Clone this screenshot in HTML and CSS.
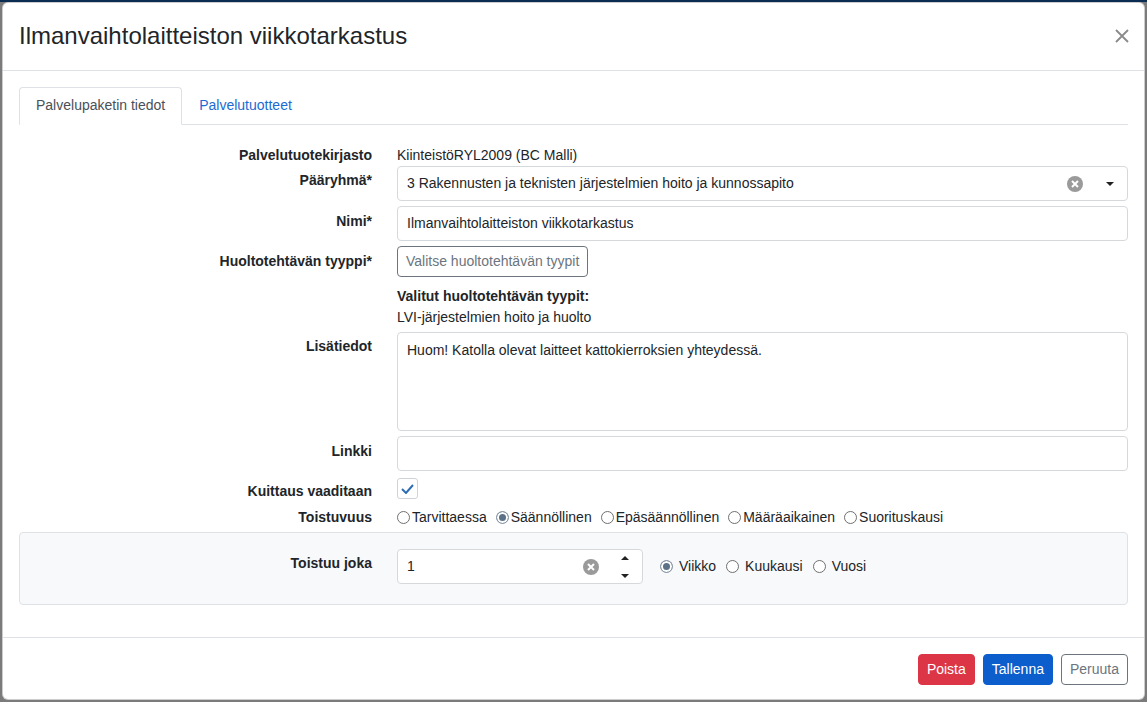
FILE: index.html
```html
<!DOCTYPE html>
<html lang="fi">
<head>
<meta charset="utf-8">
<title>Ilmanvaihtolaitteiston viikkotarkastus</title>
<link rel="stylesheet" href="styles.css">
</head>
<body>
<div class="modal">
  <div class="modal-header">
    <h4 class="modal-title">Ilmanvaihtolaitteiston viikkotarkastus</h4>
    <button class="close" type="button" aria-label="Sulje">
      <svg width="14" height="14" viewBox="0 0 14 14"><path d="M1 1L13 13M13 1L1 13" stroke="#8a8a8a" stroke-width="1.8" fill="none"/></svg>
    </button>
  </div>
  <div class="modal-body">
    <ul class="tabs">
      <li class="tab active">Palvelupaketin tiedot</li>
      <li class="tab">Palvelutuotteet</li>
    </ul>
    <div class="tab-content">
      <div class="form">
        <div class="label">Palvelutuotekirjasto</div>
        <div class="static">KiinteistöRYL2009 (BC Malli)</div>

        <div class="label pt4">Pääryhmä*</div>
        <div class="control select">
          <span class="control-text">3 Rakennusten ja teknisten järjestelmien hoito ja kunnossapito</span>
          <svg class="clear" width="16" height="16" viewBox="0 0 16 16"><circle cx="8" cy="8" r="8" fill="#9a9a9a"/><path d="M5 5l6 6M11 5l-6 6" stroke="#fff" stroke-width="2"/></svg>
          <svg class="caret" width="8" height="4" viewBox="0 0 8 4"><path d="M0 0h8L4 4z" fill="#222"/></svg>
        </div>

        <div class="label pt5">Nimi*</div>
        <div class="control"><span class="control-text">Ilmanvaihtolaitteiston viikkotarkastus</span></div>

        <div class="label pt5">Huoltotehtävän tyyppi*</div>
        <div class="field-stack">
          <button class="btn btn-outline btn-choose" type="button">Valitse huoltotehtävän tyypit</button>
          <div class="chosen">
            <div class="chosen-title">Valitut huoltotehtävän tyypit:</div>
            <div>LVI-järjestelmien hoito ja huolto</div>
          </div>
        </div>

        <div class="label pt4">Lisätiedot</div>
        <div class="control textarea">Huom! Katolla olevat laitteet kattokierroksien yhteydessä.</div>

        <div class="label pt5">Linkki</div>
        <div class="control"></div>

        <div class="label pt5">Kuittaus vaaditaan</div>
        <div class="check-row">
          <span class="checkbox">
            <svg width="13" height="10" viewBox="0 0 13 10"><path d="M1 5l4 4 7-8" fill="none" stroke="#2f6db5" stroke-width="2"/></svg>
          </span>
        </div>

        <div class="label">Toistuvuus</div>
        <div class="radios">
          <span class="radio"><span class="dot"></span>Tarvittaessa</span>
          <span class="radio"><span class="dot checked"></span>Säännöllinen</span>
          <span class="radio"><span class="dot"></span>Epäsäännöllinen</span>
          <span class="radio"><span class="dot"></span>Määräaikainen</span>
          <span class="radio"><span class="dot"></span>Suorituskausi</span>
        </div>
      </div>

      <div class="panel">
        <div class="form panel-form">
          <div class="label pt4">Toistuu joka</div>
          <div class="repeat-row">
            <div class="control number">
              <span class="control-text">1</span>
              <svg class="clear" width="16" height="16" viewBox="0 0 16 16"><circle cx="8" cy="8" r="8" fill="#9a9a9a"/><path d="M5 5l6 6M11 5l-6 6" stroke="#fff" stroke-width="2"/></svg>
              <svg class="spinner" width="8" height="24" viewBox="0 0 8 24"><path d="M0 5h8L4 1z M0 19h8l-4 4z" fill="#222"/></svg>
            </div>
            <div class="radios radios-wide">
              <span class="radio"><span class="dot checked"></span>Viikko</span>
              <span class="radio"><span class="dot"></span>Kuukausi</span>
              <span class="radio"><span class="dot"></span>Vuosi</span>
            </div>
          </div>
        </div>
      </div>
    </div>
  </div>
  <div class="modal-footer">
    <button class="btn btn-danger" type="button">Poista</button>
    <button class="btn btn-primary" type="button">Tallenna</button>
    <button class="btn btn-outline" type="button">Peruuta</button>
  </div>
</div>
</body>
</html>
```

FILE: styles.css
```css
* {
  box-sizing: border-box;
}

html,
body {
  margin: 0;
  height: 100%;
}

body {
  padding: 2px 2px 0 2px;
  overflow: hidden;
  background: linear-gradient(#0b2c52 0, #0b2c52 2px, #7b7b7b 2px, #7b7b7b 100%);
  font-family: "Liberation Sans", Arial, sans-serif;
  font-size: 14px;
  line-height: 21px;
  color: #212529;
}

.modal {
  width: 1143px;
  height: 698px;
  display: flex;
  flex-direction: column;
  background: #fff;
  border: 1px solid rgba(0, 0, 0, 0.2);
  border-radius: 6px;
}

.modal-header {
  display: flex;
  align-items: center;
  justify-content: space-between;
  padding: 15px 16px 16px;
  border-bottom: 1px solid #dee2e6;
}

.modal-title {
  margin: 0;
  font-size: 24px;
  font-weight: 400;
  line-height: 36px;
  color: #212529;
}

.close {
  display: flex;
  padding: 0;
  margin-right: -1px;
  border: 0;
  background: transparent;
}

.modal-body {
  flex: 1;
  padding: 16px;
}

.tabs {
  display: flex;
  margin: 0;
  padding: 0;
  list-style: none;
  border-bottom: 1px solid #dee2e6;
}

.tab {
  padding: 7px 16px 8px;
  margin-bottom: -1px;
  border: 1px solid transparent;
  border-radius: 4px 4px 0 0;
  color: #1a6bd2;
}

.tab.active {
  color: #495057;
  background: #fff;
  border-color: #dee2e6 #dee2e6 #fff;
}

.tab-content {
  padding-top: 20px;
}

.form {
  display: grid;
  grid-template-columns: 353px 731px;
  column-gap: 25px;
  align-items: start;
}

.label {
  text-align: right;
  font-weight: 700;
  color: #212529;
}

.pt4 {
  padding-top: 4px;
}

.pt5 {
  padding-top: 5px;
}

.static {
  color: #212529;
}

.control {
  display: flex;
  align-items: center;
  height: 35px;
  margin-bottom: 5px;
  padding: 0 9px;
  border: 1px solid #d6d9dc;
  border-radius: 4px;
  background: #fff;
  color: #212529;
}

.control-text {
  flex: 1;
}

.select {
  padding-right: 13px;
}

.select .clear {
  margin-right: 23px;
}

.textarea {
  display: block;
  height: 99px;
  padding: 7px 9px;
}

.field-stack {
  display: flex;
  flex-direction: column;
  align-items: flex-start;
}

.btn {
  padding: 4px 8px;
  border: 1px solid transparent;
  border-radius: 4px;
  font-family: inherit;
  font-size: 14px;
  line-height: 21px;
  cursor: pointer;
}

.btn-outline {
  background: #fff;
  border-color: #6c757d;
  color: #6c757d;
}

.btn-choose {
  margin-bottom: 9px;
}

.btn-danger {
  background: #dc3545;
  border-color: #dc3545;
  color: #fff;
}

.btn-primary {
  background: #0b5ecb;
  border-color: #0b5ecb;
  color: #fff;
}

.chosen {
  margin-bottom: 4px;
}

.chosen-title {
  font-weight: 700;
}

.check-row {
  padding: 2px 0 8px;
}

.checkbox {
  display: flex;
  align-items: center;
  justify-content: center;
  width: 21px;
  height: 21px;
  border: 1px solid #cfd3d7;
  border-radius: 3px;
  background: #fff;
}

.radios {
  display: flex;
  align-items: center;
  gap: 9px;
  margin-bottom: 4px;
}

.radio {
  display: inline-flex;
  align-items: center;
  gap: 2px;
}

.dot {
  width: 13px;
  height: 13px;
  border: 1px solid #6f6f6f;
  border-radius: 50%;
  background: #fff;
}

.dot.checked {
  border-color: #8b98a5;
  background: #5b7187;
  box-shadow: inset 0 0 0 2px #fff;
}

.panel {
  margin-bottom: 16px;
  padding: 16px 0 15px;
  background: #f8f9fa;
  border: 1px solid #dee2e6;
  border-radius: 4px;
}

.panel-form {
  grid-template-columns: 352px 730px;
}

.repeat-row {
  display: flex;
  align-items: center;
  gap: 17px;
  margin-bottom: 5px;
}

.number {
  width: 246px;
  margin-bottom: 0;
  padding-right: 13px;
}

.number .clear {
  margin-right: 22px;
}

.radios-wide {
  gap: 10px;
  margin-bottom: 0;
}

.radios-wide .radio {
  gap: 6px;
}

.modal-footer {
  display: flex;
  justify-content: flex-end;
  gap: 8px;
  padding: 16px 16px 14px;
  border-top: 1px solid #dee2e6;
}
```
